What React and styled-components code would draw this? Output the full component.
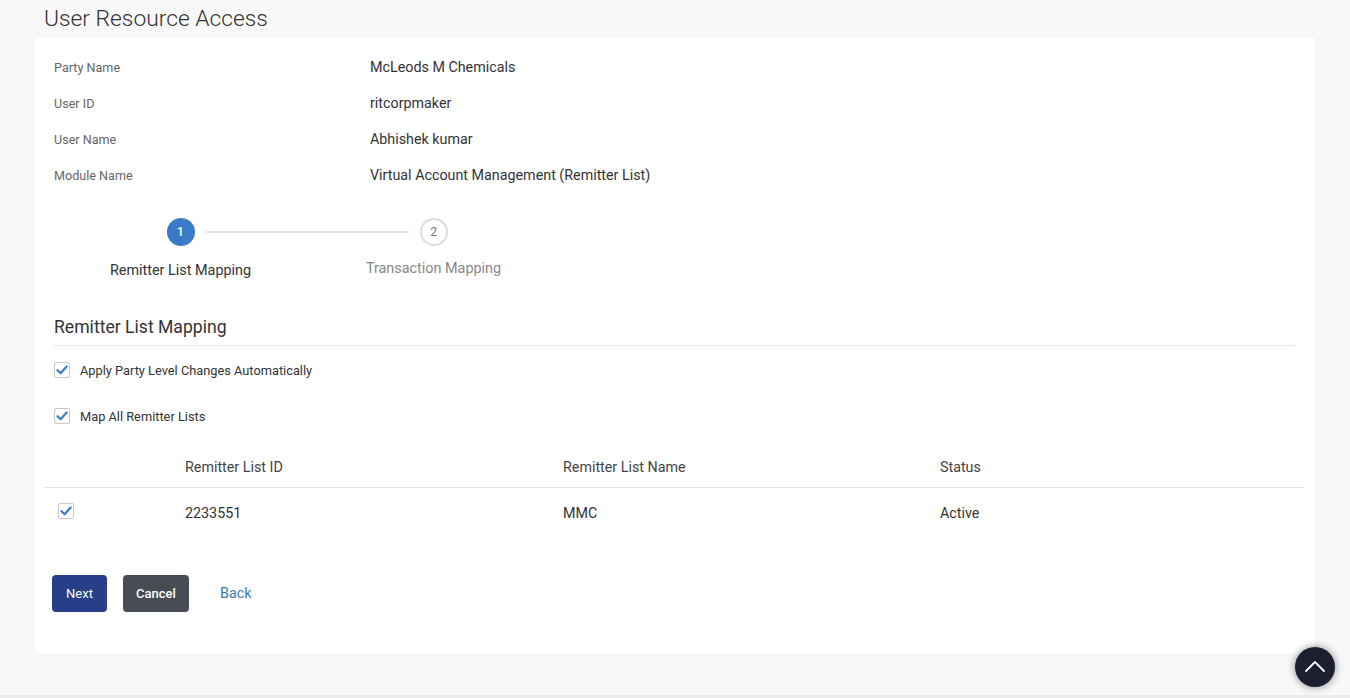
import React, { useState } from "react";
import styled, { createGlobalStyle } from "styled-components";

const GlobalStyle = createGlobalStyle`
  body {
    margin: 0;
    background: #f8f8f8;
    font-family: Roboto, "Liberation Sans", Arial, sans-serif;
    color: #333;
  }
`;

//data
const INFO = [
  { label: "Party Name", value: "McLeods M Chemicals" },
  { label: "User ID", value: "ritcorpmaker" },
  { label: "User Name", value: "Abhishek kumar" },
  { label: "Module Name", value: "Virtual Account Management (Remitter List)" },
];

const STEPS = [
  { no: 1, title: "Remitter List Mapping", active: true },
  { no: 2, title: "Transaction Mapping", active: false },
];

const ROWS = [{ id: "2233551", name: "MMC", status: "Active" }];

const CheckIcon = () => (
  <svg width="12" height="10" viewBox="0 0 12 10">
    <path
      d="M1.5 5.2 L4.6 8.2 L10.6 1.6"
      fill="none"
      stroke="#3a7bc8"
      strokeWidth="2.2"
      strokeLinecap="round"
      strokeLinejoin="round"
    />
  </svg>
);

const CheckBox = ({ checked, onClick }) => (
  <Box onClick={onClick}>{checked && <CheckIcon />}</Box>
);

const App = () => {
  const [applyParty, setApplyParty] = useState(true);
  const [mapAll, setMapAll] = useState(true);
  const [rowChecked, setRowChecked] = useState(true);

  return (
    <>
      <GlobalStyle />
      <Page>
        <PageTitle>User Resource Access</PageTitle>
        <Card>
          <InfoList>
            {INFO.map((item) => (
              <InfoRow key={item.label}>
                <InfoLabel>{item.label}</InfoLabel>
                <InfoValue>{item.value}</InfoValue>
              </InfoRow>
            ))}
          </InfoList>

          <Stepper>
            {STEPS.map((step, idx) => (
              <Step key={step.no}>
                <StepHead $connector={idx < STEPS.length - 1}>
                  <StepCircle $active={step.active}>{step.no}</StepCircle>
                </StepHead>
                <StepLabel $active={step.active}>{step.title}</StepLabel>
              </Step>
            ))}
          </Stepper>

          <SectionTitle>Remitter List Mapping</SectionTitle>

          <CheckRow>
            <CheckBox
              checked={applyParty}
              onClick={() => setApplyParty(!applyParty)}
            />
            <CheckLabel>Apply Party Level Changes Automatically</CheckLabel>
          </CheckRow>
          <CheckRow $gap>
            <CheckBox checked={mapAll} onClick={() => setMapAll(!mapAll)} />
            <CheckLabel>Map All Remitter Lists</CheckLabel>
          </CheckRow>

          <Table>
            <HeadRow>
              <Cell />
              <HeadCell>Remitter List ID</HeadCell>
              <HeadCell>Remitter List Name</HeadCell>
              <HeadCell>Status</HeadCell>
            </HeadRow>
            {ROWS.map((row) => (
              <BodyRow key={row.id}>
                <BoxCell>
                  <CheckBox
                    checked={rowChecked}
                    onClick={() => setRowChecked(!rowChecked)}
                  />
                </BoxCell>
                <Cell>{row.id}</Cell>
                <Cell>{row.name}</Cell>
                <Cell>{row.status}</Cell>
              </BodyRow>
            ))}
          </Table>

          <ButtonBar>
            <PrimaryButton>Next</PrimaryButton>
            <SecondaryButton>Cancel</SecondaryButton>
            <LinkButton>Back</LinkButton>
          </ButtonBar>
        </Card>
        <FooterLine />
      </Page>
      <ScrollTop aria-label="scroll to top">
        <svg width="22" height="14" viewBox="0 0 22 14">
          <path
            d="M2 12 L11 3 L20 12"
            fill="none"
            stroke="#fff"
            strokeWidth="1.8"
            strokeLinecap="round"
            strokeLinejoin="round"
          />
        </svg>
      </ScrollTop>
    </>
  );
};

const Page = styled.div`
  display: flex;
  flex-direction: column;
  min-height: 698px;
`;

const PageTitle = styled.h1`
  margin: 0;
  height: 37px;
  padding: 1px 0 0 44px;
  font-size: 22.8px;
  line-height: 36px;
  font-weight: 300;
  color: #333;
`;

const Card = styled.div`
  margin: 0 35px;
  padding: 11px 20px 41px 19px;
  background: #fff;
`;

const InfoList = styled.div`
  display: flex;
  flex-direction: column;
`;

const InfoRow = styled.div`
  display: grid;
  grid-template-columns: 316px 1fr;
  align-items: center;
  height: 36px;
`;

const InfoLabel = styled.div`
  font-size: 12.6px;
  color: #666;
`;

const InfoValue = styled.div`
  font-size: 14.3px;
  color: #333;
`;

const Stepper = styled.div`
  display: flex;
  margin-top: 25px;
`;

const Step = styled.div`
  display: flex;
  flex-direction: column;
  align-items: center;
  width: 253px;
`;

const StepHead = styled.div`
  position: relative;
  display: flex;
  justify-content: center;
  width: 100%;

  &::after {
    content: "";
    display: ${(p) => (p.$connector ? "block" : "none")};
    position: absolute;
    top: 13px;
    left: calc(50% + 25px);
    width: 203px;
    height: 2px;
    background: #e2e2e2;
  }
`;

const StepCircle = styled.div`
  display: flex;
  align-items: center;
  justify-content: center;
  box-sizing: border-box;
  width: 28px;
  height: 28px;
  border-radius: 50%;
  background: ${(p) => (p.$active ? "#3a7bc8" : "#fff")};
  border: 2px solid ${(p) => (p.$active ? "#3a7bc8" : "#dcdcdc")};
  color: ${(p) => (p.$active ? "#fff" : "#777")};
  font-size: 12px;
  font-weight: ${(p) => (p.$active ? 500 : 400)};
`;

const StepLabel = styled.div`
  margin-top: ${(p) => (p.$active ? "15px" : "13px")};
  margin-bottom: ${(p) => (p.$active ? "0" : "2px")};
  font-size: 14.4px;
  line-height: 20px;
  color: ${(p) => (p.$active ? "#333" : "#888")};
`;

const SectionTitle = styled.h2`
  margin: 34px 0 0;
  padding-bottom: 6px;
  font-size: 17.6px;
  line-height: 24px;
  font-weight: 400;
  color: #333;
  border-bottom: 1px solid #e6e6e6;
`;

const CheckRow = styled.div`
  display: flex;
  align-items: center;
  gap: 10px;
  height: 20px;
  margin-top: ${(p) => (p.$gap ? "26px" : "14px")};
`;

const Box = styled.span`
  display: flex;
  align-items: center;
  justify-content: center;
  box-sizing: border-box;
  width: 16px;
  height: 16px;
  border: 1px solid #c8c8c8;
  border-radius: 2px;
  background: #fff;
  cursor: pointer;
`;

const CheckLabel = styled.span`
  font-size: 12.8px;
  color: #333;
`;

const Table = styled.div`
  margin: 21px -9px 0 -10px;
`;

const HeadRow = styled.div`
  display: grid;
  grid-template-columns: 141px 378px 377px 1fr;
  align-items: center;
  height: 40px;
  border-bottom: 1px solid #e3e3e3;
`;

const BodyRow = styled.div`
  display: grid;
  grid-template-columns: 141px 378px 377px 1fr;
  align-items: center;
  height: 50px;
`;

const Cell = styled.div`
  font-size: 14.3px;
  color: #333;
`;

const HeadCell = styled(Cell)`
  color: #444;
`;

const BoxCell = styled.div`
  display: flex;
  padding-left: 14px;
  margin-top: -5px;
`;

const ButtonBar = styled.div`
  display: flex;
  align-items: center;
  margin-top: 37px;
  margin-left: -2px;
`;

const PrimaryButton = styled.button`
  height: 37px;
  width: 55px;
  border: none;
  border-radius: 4px;
  background: #263f88;
  color: #fff;
  font-family: Roboto, "Liberation Sans", Arial, sans-serif;
  font-size: 13px;
  cursor: pointer;
`;

const SecondaryButton = styled(PrimaryButton)`
  width: 66px;
  margin-left: 16px;
  background: #474b54;
  font-weight: 500;
`;

const LinkButton = styled.button`
  margin-left: 31px;
  padding: 0;
  border: none;
  background: none;
  color: #3d7cab;
  font-family: Roboto, "Liberation Sans", Arial, sans-serif;
  font-size: 14.4px;
  cursor: pointer;
`;

const FooterLine = styled.div`
  margin-top: auto;
  height: 3px;
  background: #ececec;
`;

const ScrollTop = styled.button`
  position: fixed;
  right: 15px;
  bottom: 11px;
  display: flex;
  align-items: center;
  justify-content: center;
  width: 40px;
  height: 40px;
  padding: 0 0 3px;
  border: none;
  border-radius: 50%;
  background: #1b1f2f;
  box-shadow: 0 0 8px rgba(0, 0, 0, 0.45);
  cursor: pointer;
`;

export default App;
